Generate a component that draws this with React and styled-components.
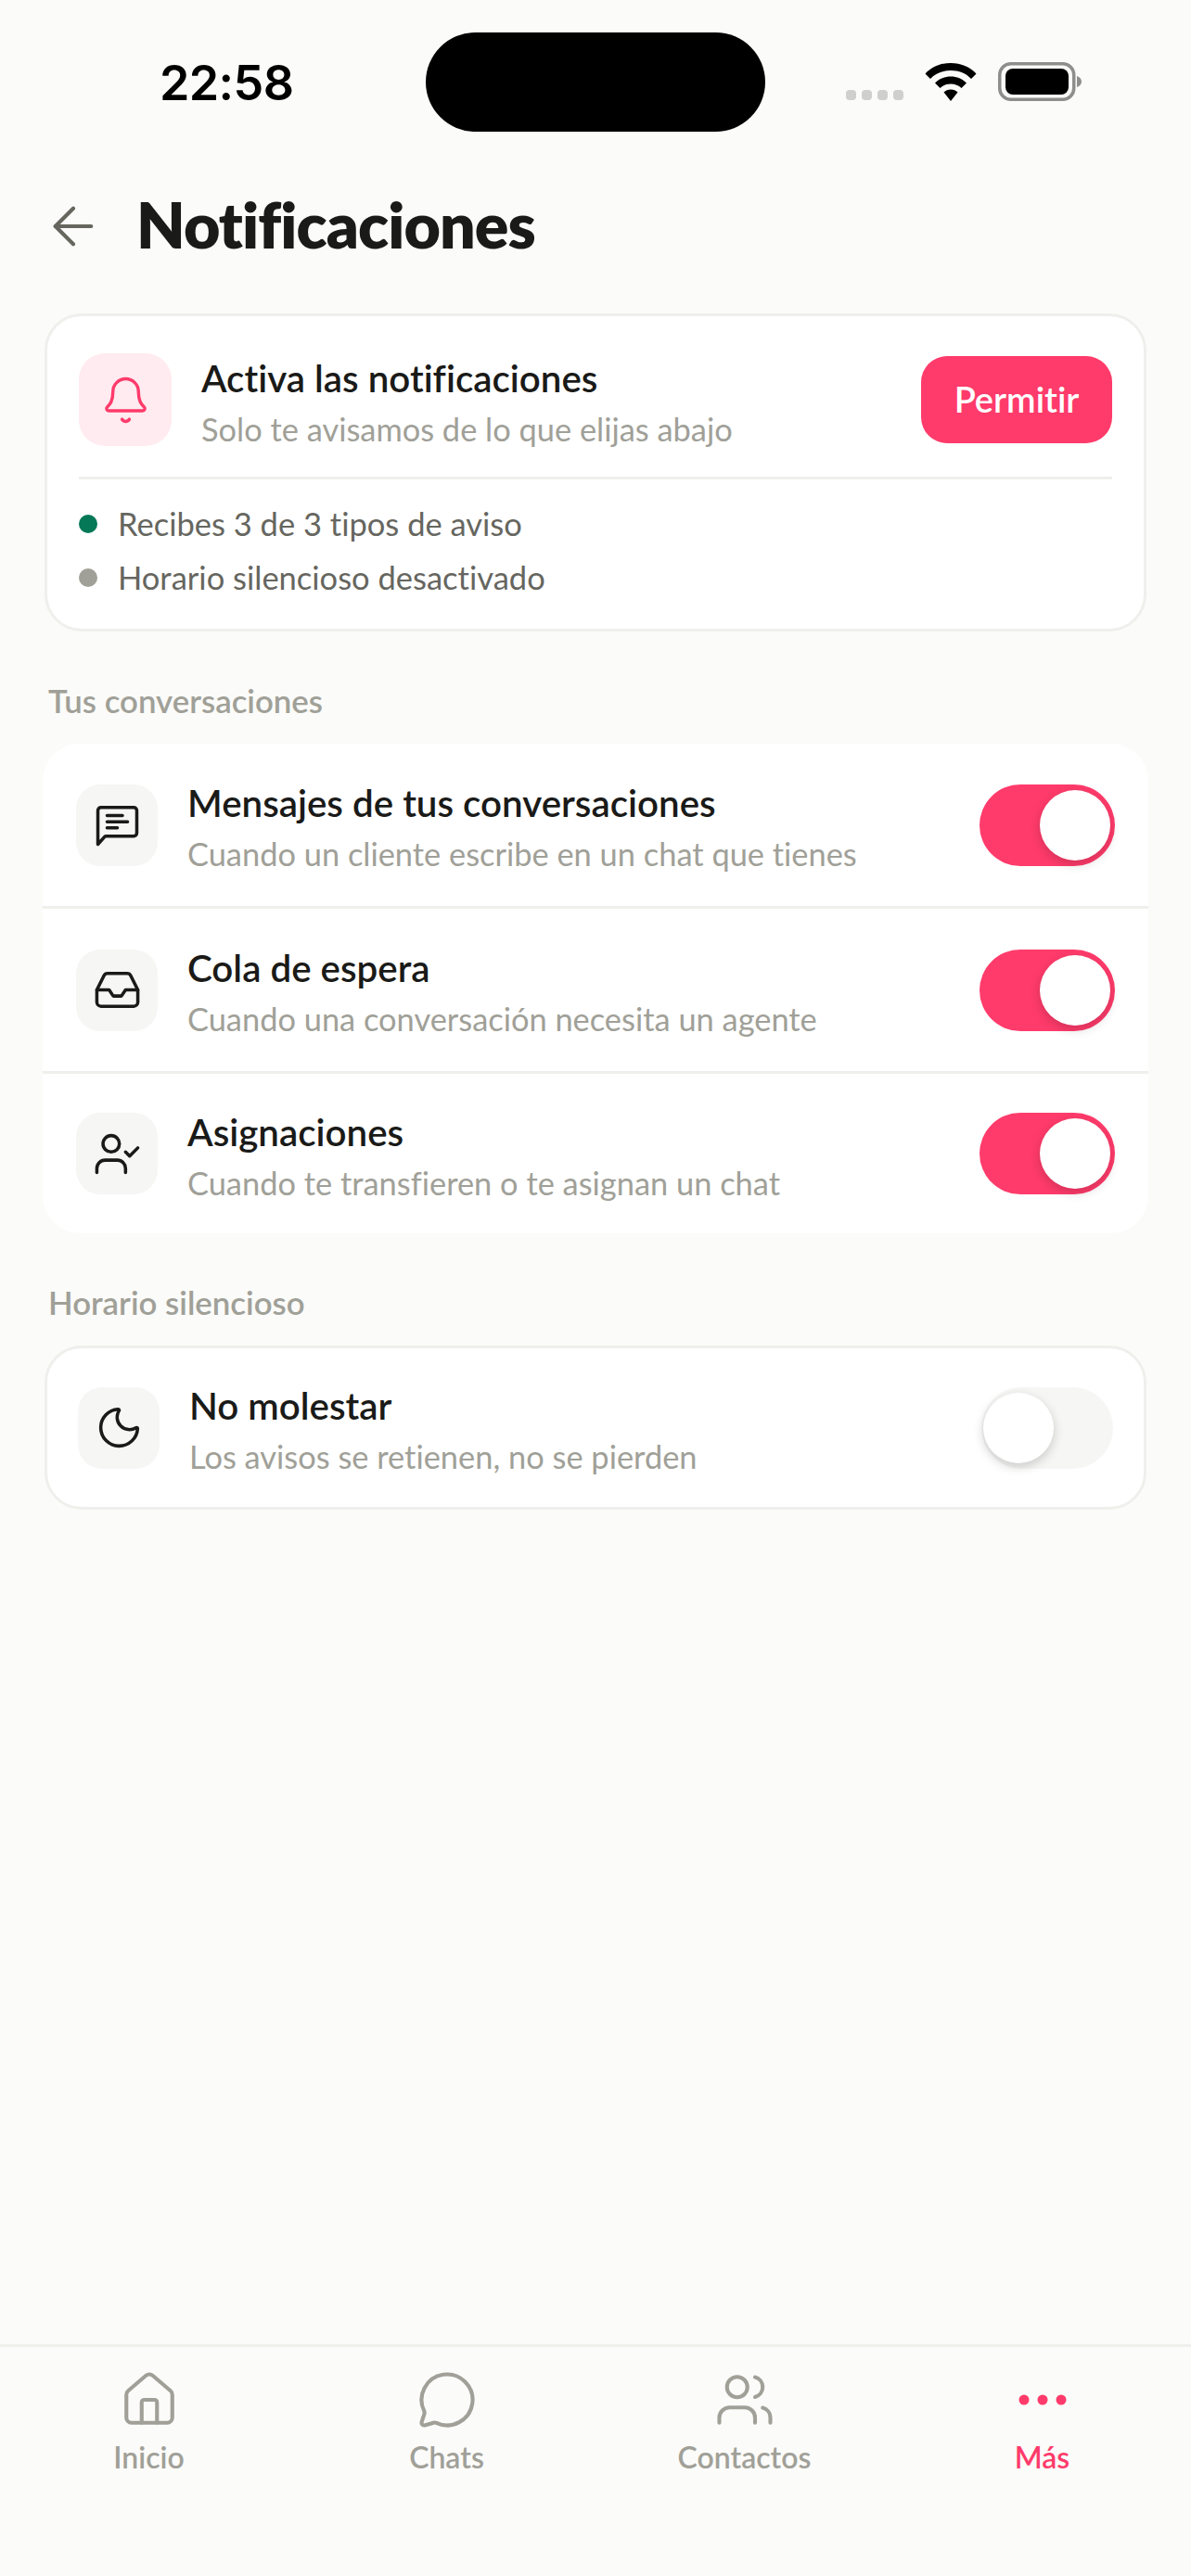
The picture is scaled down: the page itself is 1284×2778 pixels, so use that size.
import React from 'react';
import styled, { createGlobalStyle } from 'styled-components';
import { ArrowLeft, Bell, Inbox, UserCheck, Moon, House, MessageCircle, Users } from 'lucide-react';

const PINK = '#ff3b6b';
const DARK = '#1a1a18';
const MUTED = '#a0a098';
const SOFT = '#66665f';
const LINE = '#efefec';
const FONT = '"Lato", "Noto Sans", sans-serif';

const Global = createGlobalStyle`
  html, body { margin: 0; padding: 0; background: #fbfbf9; }
  * { box-sizing: border-box; font-variant-ligatures: none; }
`;

const Screen = styled.div`
  width: 1284px;
  height: 2778px;
  display: flex;
  flex-direction: column;
  background: #fbfbf9;
  font-family: ${FONT};
  color: ${DARK};
  overflow: hidden;
`;

const StatusBar = styled.div`
  height: 177px;
  flex: none;
  padding: 35px 118px 0 172px;
  display: flex;
  align-items: flex-start;
`;

const Clock = styled.div`
  margin-top: 33px;
  width: 144px;
  font-family: "Inter", sans-serif;
  font-weight: 600;
  font-size: 52px;
  line-height: 44px;
  letter-spacing: -0.6px;
  color: #000;
`;

const Island = styled.div`
  margin-left: 143px;
  width: 366px;
  height: 107px;
  border-radius: 54px;
  background: #000;
`;

const StatusIcons = styled.div`
  margin: 31px 0 0 87px;
  width: 254px;
  height: 44px;
  display: flex;
  align-items: center;
  justify-content: space-between;
`;

const Signal = styled.div`
  display: flex;
  gap: 6px;
  margin-top: 29px;
`;

const SignalDot = styled.span`
  width: 11px;
  height: 11px;
  border-radius: 4px;
  background: #cfcfcd;
`;

const Header = styled.header`
  flex: none;
  height: 161px;
  padding: 0 0 0 46px;
  display: flex;
  align-items: flex-start;
  gap: 35px;
  color: ${SOFT};
`;

const BackIcon = styled(ArrowLeft)`
  margin-top: 34px;
  flex: none;
`;

const Title = styled.h1`
  margin: 21px 0 0;
  font-size: 68px;
  line-height: 88px;
  font-weight: 800;
  letter-spacing: -0.9px;
  color: ${DARK};
`;

const Content = styled.main`
  flex: 1;
  padding: 0 48px;
  display: flex;
  flex-direction: column;
`;

const Card = styled.section`
  background: #fff;
  border-radius: 40px;
  border: 3px solid ${LINE};
`;

const ActivateCard = styled(Card)`
  height: 343px;
  padding: 37px 34px 0;
`;

const TopRow = styled.div`
  height: 139px;
  display: flex;
  align-items: center;
  padding-bottom: 30px;
  border-bottom: 3px solid ${LINE};
`;

const IconBox = styled.div`
  flex: none;
  width: ${p => p.$size || 88}px;
  height: ${p => p.$size || 88}px;
  border-radius: ${p => p.$radius || 26}px;
  background: ${p => p.$tint || '#f6f6f5'};
  color: ${p => p.$color || DARK};
  display: flex;
  align-items: center;
  justify-content: center;
`;

const Texts = styled.div`
  flex: 1;
  min-width: 0;
  margin-left: 32px;
  padding-top: 7px;
`;

const RowTitle = styled.div`
  font-size: 40.3px;
  line-height: 52px;
  font-weight: 600;
  color: ${DARK};
`;

const RowSub = styled.div`
  margin-top: 4px;
  font-size: 34.4px;
  line-height: 50px;
  color: ${MUTED};
`;

const AllowButton = styled.button`
  flex: none;
  width: 206px;
  height: 94px;
  border: 0;
  border-radius: 28px;
  background: ${PINK};
  color: #fff;
  font-family: ${FONT};
  font-size: 38px;
  line-height: 90px;
  padding: 0 0 2px;
  font-weight: 600;
`;

const StatusLines = styled.div`
  padding-top: 23px;
  display: flex;
  flex-direction: column;
  gap: 8px;
`;

const StatusLine = styled.div`
  display: flex;
  align-items: center;
  gap: 22px;
  font-size: 34.5px;
  line-height: 50px;
  color: ${SOFT};
`;

const Dot = styled.span`
  flex: none;
  width: 20px;
  height: 20px;
  border-radius: 50%;
  background: ${p => p.$color};
`;

const SectionLabel = styled.h2`
  margin: 0;
  padding: 52px 0 0 4px;
  height: 121px;
  font-size: 34.8px;
  line-height: 46px;
  font-weight: 600;
  color: ${MUTED};
`;

const PlainCard = styled.section`
  background: #fff;
  border-radius: 40px;
  margin: 0 -2px;
  overflow: hidden;
`;

const Row = styled.div`
  height: ${p => p.$height}px;
  padding: 0 ${p => p.$pad || 36}px;
  display: flex;
  align-items: center;
  border-top: ${p => (p.$first ? 'none' : `3px solid ${LINE}`)};
`;

const SwitchTrack = styled.div`
  flex: none;
  position: relative;
  width: ${p => p.$width}px;
  height: 88px;
  border-radius: 44px;
  background: ${p => (p.$on ? PINK : '#f6f6f5')};
`;

const SwitchThumb = styled.span`
  position: absolute;
  top: 6px;
  ${p => (p.$on ? 'right: 5px;' : 'left: 2px;')}
  width: 76px;
  height: 76px;
  border-radius: 50%;
  background: #fff;
  box-shadow: 0 4px 12px rgba(0, 0, 0, 0.18);
`;

const TabBar = styled.nav`
  flex: none;
  height: 250px;
  border-top: 3px solid ${LINE};
  display: grid;
  grid-template-columns: repeat(4, 1fr);
  padding-top: 24px;
`;

const Tab = styled.div`
  display: flex;
  flex-direction: column;
  align-items: center;
  color: ${p => (p.$active ? PINK : MUTED)};
  font-size: 32px;
  line-height: 44px;
  font-weight: 600;
  gap: 7px;
`;

const ChatIcon = () => (
  <svg width="53" height="53" viewBox="0 0 24 24" fill="none" stroke="currentColor" strokeWidth="1.6" strokeLinecap="round" strokeLinejoin="round">
    <path d="M2.5 21.5V5a1.5 1.500 0 0 1 1.500-1.500h16A1.500 1.500 0 0 1 21.500 5v11a1.500 1.500 0 0 1-1.500 1.500H6.500a1 1 0 0 0-.7.3z" />
    <path d="M7 7.500h7.500M7 10.500h10M7 13.500h5" />
  </svg>
);

const WifiIcon = () => (
  <svg width="56" height="41" viewBox="0 0 56 41" fill="#000">
    <path d="M28 0C17 0 7.500 4 0.500 11.500L6 17C11.500 11 19 8 28 8S44.500 11 50 17L55.500 11.500C48.500 4 39 0 28 0z" />
    <path d="M28 14.500c-6.500 0-12.500 2.500-17 7l5.500 5.500c3-3 7-4.500 11.500-4.500s8.500 1.500 11.500 4.500l5.500-5.500c-4.500-4.500-10.500-7-17-7z" />
    <path d="M28 28.500c-3 0-5.500 1-7.500 3L28 41l7.500-9.500c-2-2-4.500-3-7.500-3z" />
  </svg>
);

const BatteryIcon = () => (
  <svg width="90" height="42" viewBox="0 0 90 42">
    <rect x="1.750" y="1.750" width="80" height="38.500" rx="12" fill="none" stroke="#8e8e8c" strokeWidth="3.500" />
    <rect x="8" y="7" width="68" height="28" rx="8" fill="#000" />
    <path d="M85 15c3 1 5 3 5 6s-2 5-5 6z" fill="#8e8e8c" />
  </svg>
);

const DotsIcon = () => (
  <svg width="66" height="66" viewBox="0 0 66 66" fill="currentColor">
    <circle cx="13" cy="33" r="5.500" />
    <circle cx="33" cy="33" r="5.500" />
    <circle cx="53" cy="33" r="5.500" />
  </svg>
);

const Switch = ({ on, width = 146 }) => (
  <SwitchTrack $on={on} $width={width}>
    <SwitchThumb $on={on} />
  </SwitchTrack>
);

const conversationRows = [
  { icon: <ChatIcon />, height: 175, title: 'Mensajes de tus conversaciones', sub: 'Cuando un cliente escribe en un chat que tienes' },
  { icon: <Inbox size={53} strokeWidth={1.6} />, height: 178, title: 'Cola de espera', sub: 'Cuando una conversación necesita un agente' },
  { icon: <UserCheck size={53} strokeWidth={1.6} />, height: 175, title: 'Asignaciones', sub: 'Cuando te transfieren o te asignan un chat' },
];

const tabs = [
  { label: 'Inicio', icon: <House size={66} strokeWidth={1.5} /> },
  { label: 'Chats', icon: <MessageCircle size={66} strokeWidth={1.5} /> },
  { label: 'Contactos', icon: <Users size={66} strokeWidth={1.5} /> },
  { label: 'Más', icon: <DotsIcon />, active: true },
];

export default function App() {
  return (
    <Screen>
      <Global />
      <StatusBar>
        <Clock>22:58</Clock>
        <Island />
        <StatusIcons>
          <Signal>
            <SignalDot /><SignalDot /><SignalDot /><SignalDot />
          </Signal>
          <WifiIcon />
          <BatteryIcon />
        </StatusIcons>
      </StatusBar>

      <Header>
        <BackIcon size={66} strokeWidth={1.5} />
        <Title>Notificaciones</Title>
      </Header>

      <Content>
        <ActivateCard>
          <TopRow>
            <IconBox $size={100} $radius={28} $tint="#ffebf0" $color={PINK}>
              <Bell size={55} strokeWidth={1.5} />
            </IconBox>
            <Texts>
              <RowTitle>Activa las notificaciones</RowTitle>
              <RowSub>Solo te avisamos de lo que elijas abajo</RowSub>
            </Texts>
            <AllowButton>Permitir</AllowButton>
          </TopRow>
          <StatusLines>
            <StatusLine><Dot $color="#047857" />Recibes 3 de 3 tipos de aviso</StatusLine>
            <StatusLine><Dot $color={MUTED} />Horario silencioso desactivado</StatusLine>
          </StatusLines>
        </ActivateCard>

        <SectionLabel>Tus conversaciones</SectionLabel>
        <PlainCard>
          {conversationRows.map((row, i) => (
            <Row key={row.title} $first={i === 0} $height={row.height}>
              <IconBox>{row.icon}</IconBox>
              <Texts>
                <RowTitle>{row.title}</RowTitle>
                <RowSub>{row.sub}</RowSub>
              </Texts>
              <Switch on />
            </Row>
          ))}
        </PlainCard>

        <SectionLabel>Horario silencioso</SectionLabel>
        <Card>
          <Row $first $height={171} $pad={33}>
            <IconBox><Moon size={53} strokeWidth={1.6} /></IconBox>
            <Texts>
              <RowTitle>No molestar</RowTitle>
              <RowSub>Los avisos se retienen, no se pierden</RowSub>
            </Texts>
            <Switch on={false} width={142} />
          </Row>
        </Card>
      </Content>

      <TabBar>
        {tabs.map(tab => (
          <Tab key={tab.label} $active={tab.active}>
            {tab.icon}
            {tab.label}
          </Tab>
        ))}
      </TabBar>
    </Screen>
  );
}
